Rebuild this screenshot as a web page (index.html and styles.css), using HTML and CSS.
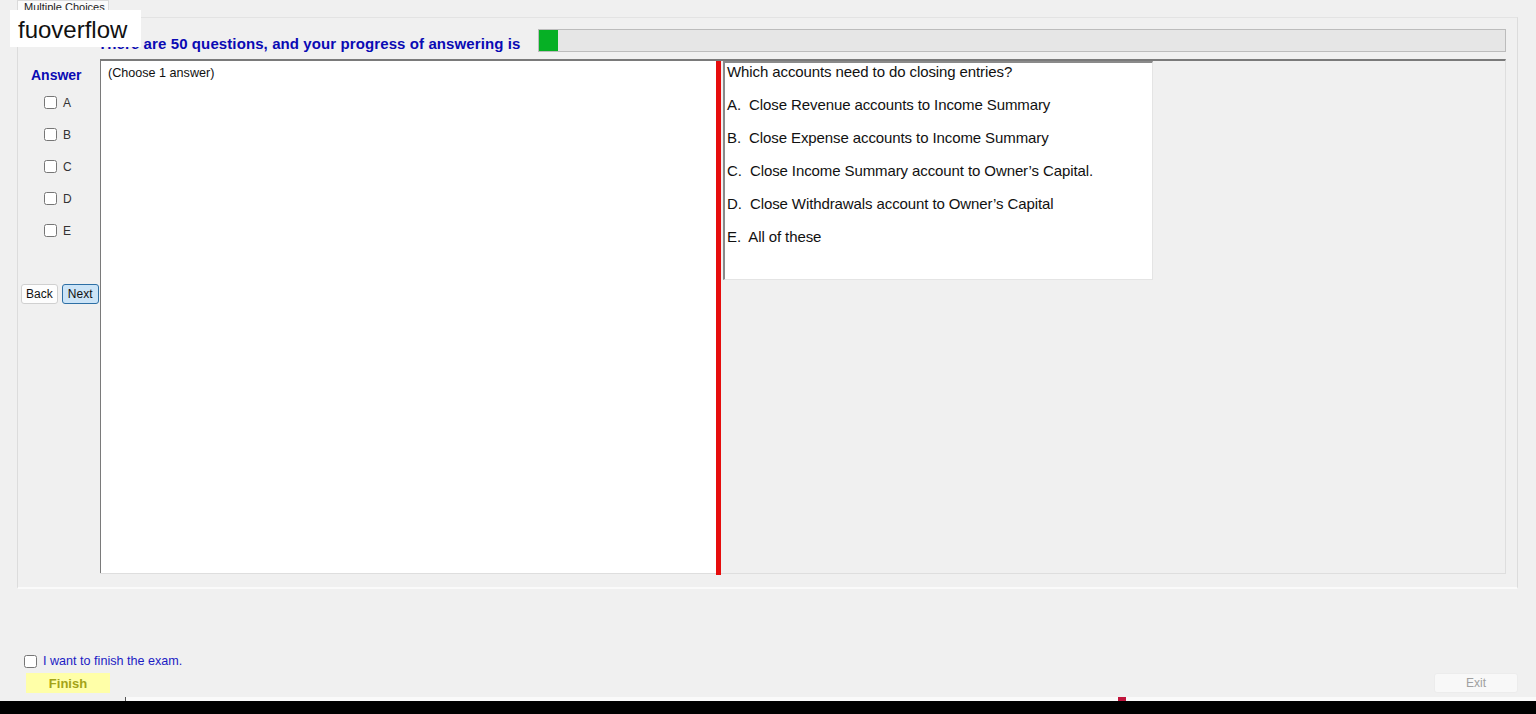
FILE: index.html
```html
<!DOCTYPE html>
<html>
  <head>
    <title>Multiple Choices</title>
    <link rel="stylesheet" href="styles.css">
  </head>

  <body>
    <div class="watermark">fuoverflow</div>

    <div class="tabs">
      <span class="tab">Multiple Choices</span>
    </div>

    <div class="tab-page">
      <div class="header">
        <span class="title">There are 50 questions, and your progress of answering is</span>
        <div class="progress">
          <div class="progress-fill" style="width: 19px"></div>
        </div>
      </div>

      <div class="content">
        <div class="answer-col">
          <span class="answer-title">Answer</span>
          <div class="choices">
            <label class="choice"><input type="checkbox" /> A</label>
            <label class="choice"><input type="checkbox" /> B</label>
            <label class="choice"><input type="checkbox" /> C</label>
            <label class="choice"><input type="checkbox" /> D</label>
            <label class="choice"><input type="checkbox" /> E</label>
          </div>
          <div class="nav-buttons">
            <button class="btn">Back</button>
            <button class="btn btn-active">Next</button>
          </div>
        </div>

        <div class="panel">
          <div class="answer-box">(Choose 1 answer)</div>
          <div class="splitter"></div>
          <div class="question-area">
            <div class="question-box">
              <p>Which accounts need to do closing entries?</p>
              <p>A.  Close Revenue accounts to Income Summary</p>
              <p>B.  Close Expense accounts to Income Summary</p>
              <p>C.  Close Income Summary account to Owner’s Capital.</p>
              <p>D.  Close Withdrawals account to Owner’s Capital</p>
              <p>E.  All of these</p>
            </div>
          </div>
        </div>
      </div>
    </div>

    <div class="footer">
      <div class="finish-left">
        <label class="finish-check"><input type="checkbox" /> I want to finish the exam.</label>
        <button class="finish-btn">Finish</button>
      </div>
      <button class="exit-btn">Exit</button>
    </div>

    <div class="strip">
      <span class="strip-mark"></span>
    </div>
    <div class="taskbar"></div>
  </body>
</html>
```

FILE: styles.css
```css
body {
  margin: 0;
  width: 1536px;
  height: 714px;
  overflow: hidden;
  background: #f0f0f0;
  font-family: "Liberation Sans", Arial, sans-serif;
  font-size: 12px;
  color: #000;
  position: relative;
}

.watermark {
  position: absolute;
  left: 10px;
  top: 10px;
  width: 123px;
  height: 37px;
  padding-left: 8px;
  background: #fff;
  font-size: 24px;
  line-height: 40px;
  color: #111;
  z-index: 5;
}

.tabs {
  height: 17px;
  padding-left: 17px;
  display: flex;
}

.tab {
  width: 92px;
  height: 17px;
  box-sizing: border-box;
  border: 1px solid #dadada;
  border-bottom: none;
  background: #fbfbfb;
  font-size: 11px;
  line-height: 13px;
  padding-left: 6px;
  color: #222;
  overflow: hidden;
  white-space: nowrap;
}

.tab-page {
  margin: 0 18px 0 17px;
  height: 572px;
  box-sizing: border-box;
  border: 1px solid #dcdcdc;
  border-top-color: #e3e3e3;
  border-bottom: 2px solid #fafafa;
  display: flex;
  flex-direction: column;
}

.header {
  height: 41px;
  box-sizing: border-box;
  padding: 11px 0 0 80px;
  display: flex;
  align-items: flex-start;
}

.title {
  font-size: 15px;
  font-weight: bold;
  color: #0a0ab4;
  margin-top: 6px;
  width: 440px;
  letter-spacing: 0.1px;
  white-space: nowrap;
}

.progress {
  flex: 1;
  height: 23px;
  margin-right: 11px;
  box-sizing: border-box;
  border: 1px solid #bcbcbc;
  background: #e6e6e6;
}

.progress-fill {
  height: 100%;
  background: #06b025;
}

.content {
  flex: 1;
  display: flex;
}

.answer-col {
  width: 82px;
  display: flex;
  flex-direction: column;
  align-items: flex-start;
}

.answer-title {
  font-size: 14px;
  font-weight: bold;
  color: #0a0ab4;
  margin: 8px 0 0 13px;
}

.choices {
  display: flex;
  flex-direction: column;
  gap: 17px;
  margin: 12px 0 0 26px;
}

.choice {
  display: flex;
  align-items: center;
  height: 15px;
  user-select: none;
  color: #333;
}

.choice input,
.finish-check input {
  width: 13px;
  height: 13px;
  margin: 0 6px 0 0;
}

.nav-buttons {
  display: flex;
  gap: 4px;
  margin: 46px 0 0 3px;
}

.btn {
  height: 20px;
  padding: 0 4px;
  font-family: "Liberation Sans", Arial, sans-serif;
  font-size: 12px;
  background: #fdfdfd;
  border: 1px solid #d0d0d0;
  border-radius: 3px;
  color: #111;
}

.btn-active {
  background: #cce4f7;
  border-color: #2d6fa5;
  width: 37px;
}

.panel {
  flex: 1;
  margin: 0 11px 13px 0;
  display: flex;
  border-top: 2px solid #7a7a7a;
  border-right: 1px solid #dedede;
  border-bottom: 1px solid #dedede;
}

.answer-box {
  width: 616px;
  box-sizing: border-box;
  background: #fff;
  border-left: 1px solid #7a7a7a;
  padding: 5px 0 0 7px;
  font-size: 12.6px;
  color: #111;
}

.splitter {
  width: 5px;
  background: #e60d0d;
  margin-bottom: -2px;
}

.question-area {
  flex: 1;
  padding: 0 0 0 2px;
}

.question-box {
  width: 430px;
  height: 219px;
  box-sizing: border-box;
  background: #fff;
  border-top: 2px solid #8a8a8a;
  border-left: 2px solid #8a8a8a;
  border-right: 1px solid #e4e4e4;
  border-bottom: 1px solid #e4e4e4;
  padding: 0 0 0 2px;
}

.question-box p {
  margin: 0 0 16px;
  font-size: 15px;
  line-height: 17px;
  letter-spacing: -0.1px;
  white-space: pre;
  color: #111;
}

.question-box p:last-child {
  margin-top: 1px;
}

.footer {
  height: 104px;
  display: flex;
  justify-content: space-between;
  align-items: flex-end;
  padding: 0 18px 0 24px;
}

.finish-left {
  display: flex;
  flex-direction: column;
  align-items: flex-start;
  gap: 5px;
}

.finish-check {
  display: flex;
  align-items: center;
  font-size: 12.6px;
  color: #1c1cc4;
  user-select: none;
}

.finish-btn {
  width: 84px;
  height: 20px;
  margin-left: 2px;
  border: none;
  background: #ffffa8;
  color: #a3a317;
  font-family: "Liberation Sans", Arial, sans-serif;
  font-size: 13px;
  font-weight: bold;
}

.exit-btn {
  width: 84px;
  height: 20px;
  border: 1px solid #ececec;
  border-radius: 3px;
  background: #f8f8f8;
  color: #a0a0a0;
  font-family: "Liberation Sans", Arial, sans-serif;
  font-size: 12px;
}

.strip {
  height: 4px;
  margin: 4px 0 0 125px;
  background: #fafafa;
  border-left: 1px solid #555;
  position: relative;
}

.strip-mark {
  position: absolute;
  left: 992px;
  top: 0;
  width: 8px;
  height: 4px;
  background: #c0143c;
}

.taskbar {
  height: 20px;
  background: #000;
}
```
